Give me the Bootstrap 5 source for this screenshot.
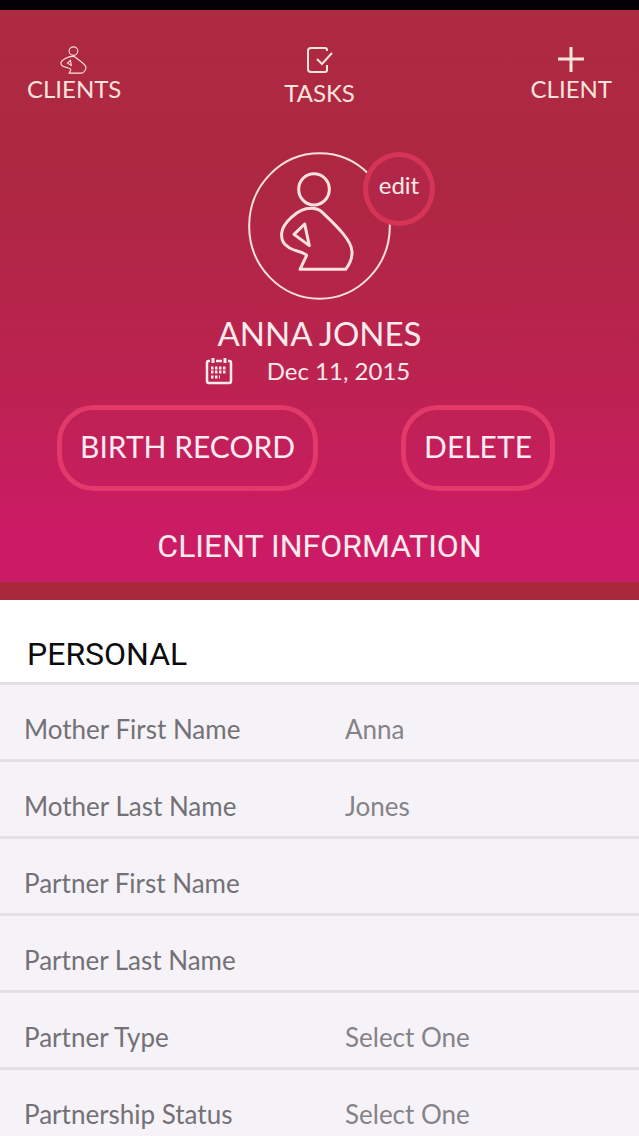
<!DOCTYPE html>
<html lang="en">
<head>
<meta charset="utf-8">
<meta name="viewport" content="width=device-width, initial-scale=1">
<title>Client Information</title>
<link href="https://cdn.jsdelivr.net/npm/bootstrap@5.3.0/dist/css/bootstrap.min.css" rel="stylesheet">
<style>
  body { font-family: Lato, "Liberation Sans", sans-serif; background: #f5f3f7; color: #77757a; }
  .status-strip { height: 10px; background: #020006; }
  .hero { background: linear-gradient(#ad2a40 0%, #ae2742 32%, #bd2252 68%, #cb1b64 90%, #cc1b66 100%); border-bottom: 18px solid #aa283c; color: #fdeaec; }
  .top-nav { display: grid; grid-template-columns: 1fr auto 1fr; padding: 36px 27px 0; }
  .top-nav a { color: #fde3dd; font-size: 24px; line-height: 30px; }
  .top-nav svg { width: 28px; height: 28px; fill: none; stroke: currentColor; }
  .avatar { width: 143px; margin-top: 44px; }
  .avatar svg { width: 143px; height: 148px; fill: none; stroke: #fde0e0; }
  .edit-btn { top: 0; left: 115px; width: 72px; height: 74px; border: 5px solid #d53457; background: #b22747; color: #fdeaec; font-size: 24px; line-height: 24px; padding: 0 0 8px; }
  .client-name { font-size: 33px; line-height: 40px; margin-top: 13px; }
  .due { font-size: 24px; line-height: 36px; gap: 34px; padding-right: 24px; }
  .due svg { width: 28px; height: 28px; }
  .actions { padding: 16px 84px 0 57px; }
  .pill { height: 86px; border: 5px solid #e2386a; border-radius: 37px; color: #fdeaf2; font-size: 30px; line-height: 36px; padding: 0 18px 4px; }
  .pill:hover { color: #fff; border-color: #f04c7c; }
  .section-title { font-family: Roboto, "Liberation Sans", sans-serif; font-size: 32px; line-height: 40px; }
  .hero .section-title { padding: 35px 0 16px; }
  .personal-title { background: #fff; color: #0c0c0e; padding: 34px 27px 8px; }
  .field-row { height: 77px; border-top: 3px solid #e2e0e4; padding: 24px 24px 0; font-size: 26px; line-height: 32px; }
  .field-row label { width: 321px; color: #737176; }
  .field-row input, .field-row select { height: 40px; min-width: 0; border: 0; padding: 0; background: transparent; color: #858388; appearance: none; outline-offset: 4px; }
</style>
</head>
<body>
<div class="status-strip"></div>
<header class="hero">
  <nav class="top-nav align-items-start">
    <a href="#clients" class="d-flex flex-column align-items-center text-decoration-none me-auto">
      <svg viewBox="145 92 232 306" stroke-width="12" aria-hidden="true"><ellipse cx="255" cy="148" rx="48" ry="46"/><path d="M243 205C205 205 120 240 118 280C117 312 160 322 180 326C205 332 231 340 226 352L208 388H348C362 388 394 355 392 325C390 290 300 240 275 214C265 206 255 205 243 205ZM222 250L190 280L232 305Z"/></svg>
      <span>CLIENTS</span>
    </a>
    <a href="#tasks" class="d-flex flex-column align-items-center text-decoration-none gap-1">
      <svg viewBox="0 0 28 28" stroke-width="2" aria-hidden="true"><path d="M21 5V4Q21 2 19 2H5Q2 2 2 5V23Q2 26 5 26H19Q21 26 21 24V19M11 13L16 18L26 7"/></svg>
      <span>TASKS</span>
    </a>
    <a href="#new-client" class="d-flex flex-column align-items-center text-decoration-none ms-auto">
      <svg viewBox="0 0 28 28" stroke-width="3" aria-hidden="true"><path d="M14 1V26M1 13H27"/></svg>
      <span>CLIENT</span>
    </a>
  </nav>

  <div class="avatar position-relative mx-auto">
    <svg class="d-block" viewBox="55 36 429 444" stroke-width="9" stroke-linejoin="round" role="img" aria-label="Client">
      <ellipse cx="269.500" cy="258" rx="211" ry="218" stroke-width="6"/>
      <ellipse cx="253" cy="148" rx="46" ry="47"/>
      <path d="M243 205C205 205 158 250 156 280C154 305 165 315 180 324C200 335 222 336 231 346L211 388H348C362 370 368 355 367 335C366 298 310 248 278 217C268 207 255 205 243 205Z"/>
      <path d="M225 252L193 283L239 317Z"/>
    </svg>
    <button type="button" class="edit-btn position-absolute rounded-circle">edit</button>
  </div>

  <h1 class="client-name fw-normal text-center mb-0">ANNA JONES</h1>
  <div class="due d-flex justify-content-center align-items-center">
    <svg viewBox="0 0 28 28" fill="none" stroke="currentColor" aria-hidden="true"><path d="M5 4H3.500Q2 4 2 6V24Q2 26 4 26H24Q26 26 26 24V6Q26 4 24.500 4H23M11 4H17" stroke-width="2.500"/><path d="M8 1V6M20 1V6" stroke-width="3"/><path d="M6 11H22M6 15H22M6 20H15" stroke-width="3" stroke-dasharray="2.500 1.500"/></svg>
    <time datetime="2015-12-11">Dec 11, 2015</time>
  </div>

  <div class="actions d-flex justify-content-between">
    <button type="button" class="btn pill">BIRTH RECORD</button>
    <button type="button" class="btn pill">DELETE</button>
  </div>
  <h2 class="section-title fw-normal text-center mb-0">CLIENT INFORMATION</h2>
</header>

<main>
  <h2 class="section-title personal-title fw-normal mb-0">PERSONAL</h2>
  <form>
    <div class="field-row d-flex"><label class="flex-shrink-0 pt-1" for="motherFirst">Mother First Name</label><input class="flex-grow-1" id="motherFirst" type="text" value="Anna"></div>
    <div class="field-row d-flex"><label class="flex-shrink-0 pt-1" for="motherLast">Mother Last Name</label><input class="flex-grow-1" id="motherLast" type="text" value="Jones"></div>
    <div class="field-row d-flex"><label class="flex-shrink-0 pt-1" for="partnerFirst">Partner First Name</label><input class="flex-grow-1" id="partnerFirst" type="text"></div>
    <div class="field-row d-flex"><label class="flex-shrink-0 pt-1" for="partnerLast">Partner Last Name</label><input class="flex-grow-1" id="partnerLast" type="text"></div>
    <div class="field-row d-flex"><label class="flex-shrink-0 pt-1" for="partnerType">Partner Type</label><select class="flex-grow-1" id="partnerType"><option>Select One</option></select></div>
    <div class="field-row d-flex"><label class="flex-shrink-0 pt-1" for="partnership">Partnership Status</label><select class="flex-grow-1" id="partnership"><option>Select One</option></select></div>
  </form>
</main>
<script src="https://cdn.jsdelivr.net/npm/bootstrap@5.3.0/dist/js/bootstrap.bundle.min.js"></script>
</body>
</html>
